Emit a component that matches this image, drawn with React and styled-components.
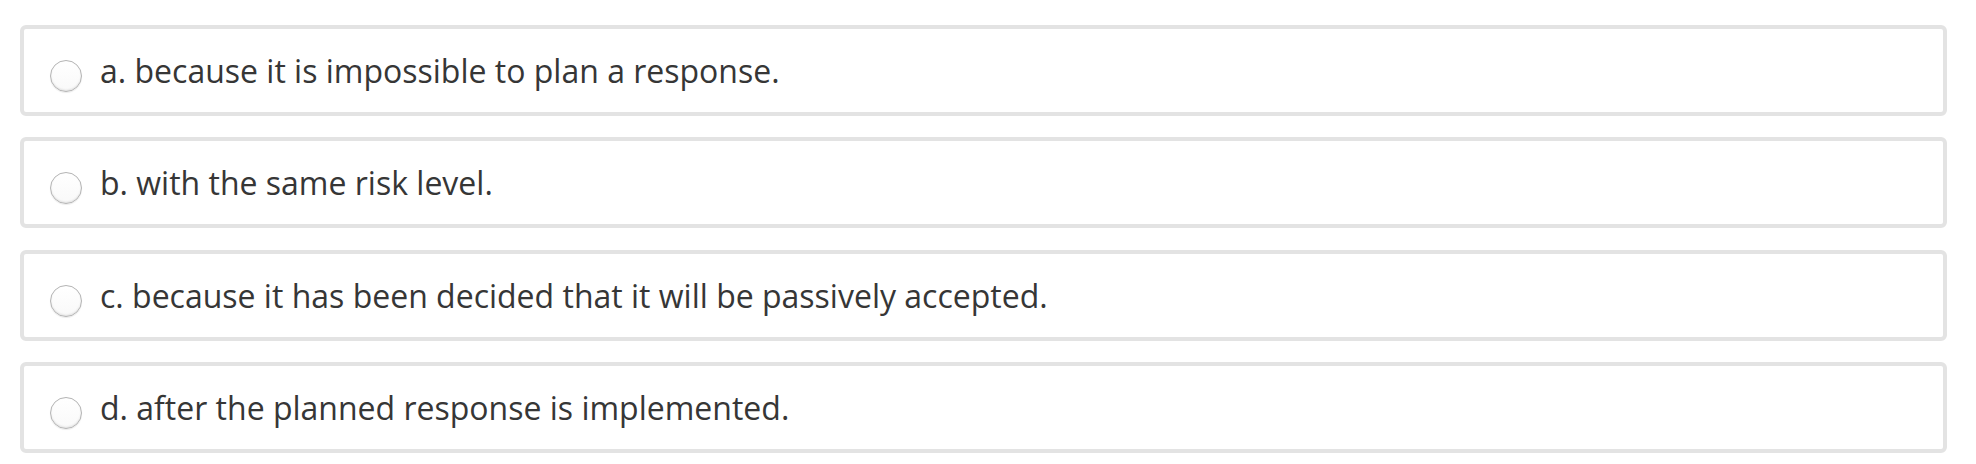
import React from 'react';
import styled, { createGlobalStyle } from 'styled-components';

const GlobalStyle = createGlobalStyle`
  html, body {
    margin: 0;
    padding: 0;
    background: #ffffff;
  }
  body {
    font-family: "Open Sans", "Liberation Sans", sans-serif;
  }
`;

const AnswerList = styled.div`
  padding: 25px 29px 0 20px;
  display: flex;
  flex-direction: column;
  gap: 21.3px;
`;

const AnswerOption = styled.label`
  display: flex;
  align-items: flex-start;
  gap: 18px;
  padding: 20px 26px;
  border: 4px solid #e3e3e3;
  border-radius: 6px;
  background: #ffffff;
  cursor: pointer;
`;

const RadioCircle = styled.span`
  flex: none;
  width: 32px;
  height: 32px;
  margin-top: 11px;
  box-sizing: border-box;
  border-radius: 50%;
  border: 1.5px solid #b4b4b4;
  background: linear-gradient(180deg, #ffffff 0%, #f9f9f9 100%);
  box-shadow: inset 0 -1px 2px rgba(0, 0, 0, 0.1), 0 1px 1px rgba(0, 0, 0, 0.08);
`;

const AnswerText = styled.span`
  font-size: 32px;
  line-height: 43px;
  color: #363636;
`;

const answers = [
  'a. because it is impossible to plan a response.',
  'b. with the same risk level.',
  'c. because it has been decided that it will be passively accepted.',
  'd. after the planned response is implemented.',
];

function App() {
  return (
    <>
      <GlobalStyle />
      <AnswerList>
        {answers.map((text) => (
          <AnswerOption key={text}>
            <RadioCircle />
            <AnswerText>{text}</AnswerText>
          </AnswerOption>
        ))}
      </AnswerList>
    </>
  );
}

export default App;
